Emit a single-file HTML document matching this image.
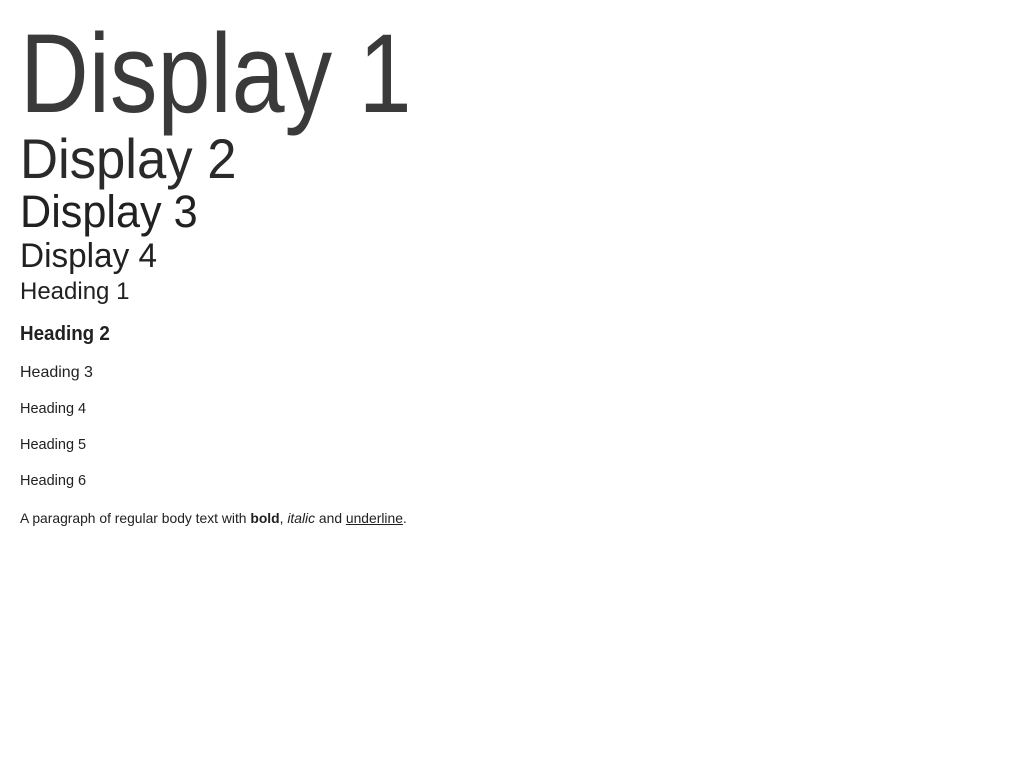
<!DOCTYPE html>
<html><head><meta charset="utf-8"><style>
html,body{margin:0;padding:0;background:#fff;width:1024px;height:768px;overflow:hidden}
body{font-family:"Liberation Sans",Arial,sans-serif;color:#212121;position:relative}
.t{position:absolute;left:20px;white-space:nowrap;transform-origin:left top;margin:0}
</style></head><body>
<div class="t" style="top:18px;font-size:112px;line-height:112px;transform:scaleX(0.85);color:#3a3a3a">Display 1</div>
<div class="t" style="top:131px;font-size:56px;line-height:56px;transform:scaleX(0.94);color:#2a2a2a">Display 2</div>
<div class="t" style="top:189px;font-size:45px;line-height:45px;transform:scaleX(0.96)">Display 3</div>
<div class="t" style="top:239px;font-size:34px;line-height:34px;transform:scaleX(0.98)">Display 4</div>
<div class="t" style="top:280px;font-size:24px;line-height:24px">Heading 1</div>
<div class="t" style="top:324px;font-size:20px;line-height:20px;font-weight:bold;transform:scaleX(0.94)">Heading 2</div>
<div class="t" style="top:365px;font-size:16px;line-height:16px">Heading 3</div>
<div class="t" style="top:402px;font-size:14.5px;line-height:14px">Heading 4</div>
<div class="t" style="top:438px;font-size:14.5px;line-height:14px">Heading 5</div>
<div class="t" style="top:474px;font-size:14.5px;line-height:14px">Heading 6</div>
<div class="t" style="top:511px;font-size:14px;line-height:14px;transform:scaleX(0.99)">A paragraph of regular body text with <b>bold</b>, <i>italic</i> and <u>underline</u>.</div>
</body></html>
